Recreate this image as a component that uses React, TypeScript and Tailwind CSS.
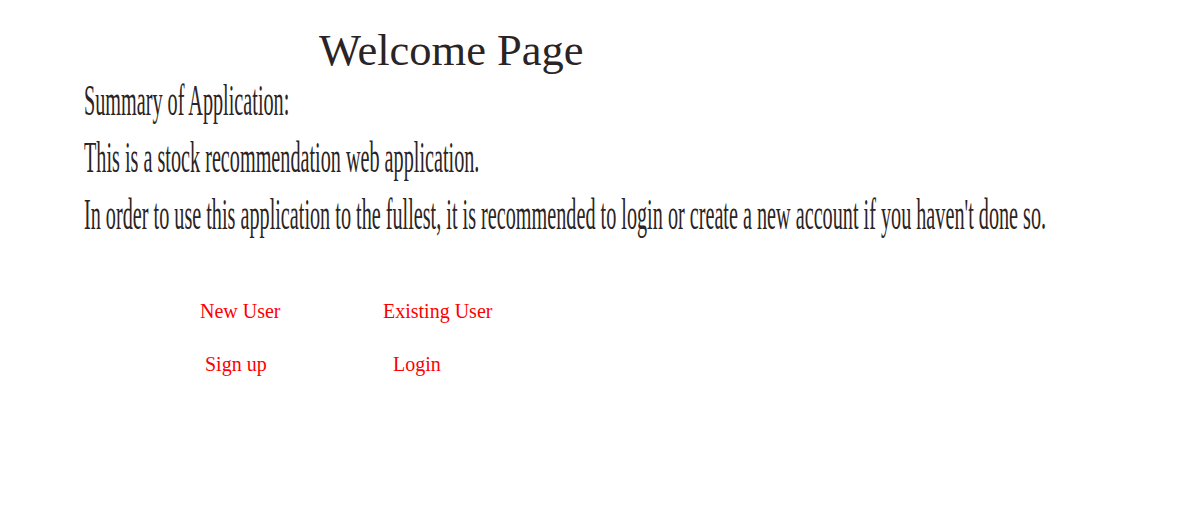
export default function App() {
  const serif = { fontFamily: '"Liberation Serif", "Times New Roman", serif' };

  return (
    <div className="min-h-[510px] w-full bg-white" style={serif}>
      <h1 className="pt-[28px] pl-[319px] text-[44.5px] leading-[44px] font-normal text-[#2b2424]">
        Welcome Page
      </h1>

      <div className="pl-[84px] text-[44px] leading-[57px] text-[#2b2424]">
        <p className="origin-left scale-x-[0.459] whitespace-nowrap">Summary of Application:</p>
        <p className="origin-left scale-x-[0.459] whitespace-nowrap">
          This is a stock recommendation web application.
        </p>
        <p className="origin-left scale-x-[0.459] whitespace-nowrap">
          In order to use this application to the fullest, it is recommended to login or create a new account if you haven't done so.
        </p>
      </div>

      <div className="mt-[56px] flex flex-col gap-[29px] text-[20px] leading-[24px] text-[#ff0000]">
        <div className="flex pl-[200px]">
          <span className="w-[183px]">New User</span>
          <span>Existing User</span>
        </div>
        <div className="flex pl-[205px]">
          <a href="#" className="w-[188px]">Sign up</a>
          <a href="#">Login</a>
        </div>
      </div>
    </div>
  );
}
